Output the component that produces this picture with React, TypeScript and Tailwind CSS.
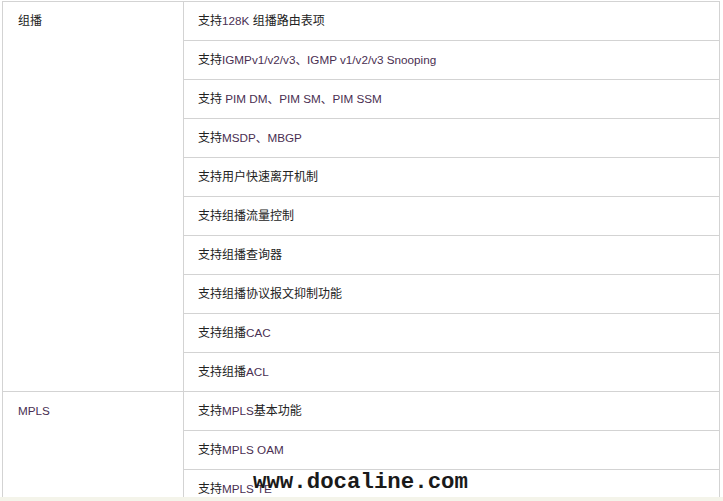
const groups = [
  {
    label: "组播",
    rows: [
      ["支持", "128K", " 组播路由表项"],
      ["支持", "IGMPv1/v2/v3、IGMP v1/v2/v3 Snooping"],
      ["支持", " PIM DM、PIM SM、PIM SSM"],
      ["支持", "MSDP、MBGP"],
      ["支持用户快速离开机制"],
      ["支持组播流量控制"],
      ["支持组播查询器"],
      ["支持组播协议报文抑制功能"],
      ["支持组播", "CAC"],
      ["支持组播", "ACL"],
    ],
  },
  {
    label: "MPLS",
    rows: [
      ["支持", "MPLS", "基本功能"],
      ["支持", "MPLS OAM"],
      ["支持", "MPLS TE"],
    ],
  },
];

// odd-index pieces are Latin text, shown in the purplish tone of the shot
function Cell({ parts }: { parts: string[] }) {
  return (
    <span className="whitespace-pre">
      {parts.map((p, i) =>
        i % 2 === 1 ? (
          <span key={i} className="text-[#4a2f52] text-[11.7px]">
            {p}
          </span>
        ) : (
          <span key={i}>{p}</span>
        )
      )}
    </span>
  );
}

function LabelText({ text }: { text: string }) {
  const latin = /^[A-Za-z]/.test(text);
  return <span className={latin ? "text-[#4a2f52] text-[11.7px]" : ""}>{text}</span>;
}

export default function App() {
  return (
    <div
      className="w-[723px] h-[501px] overflow-hidden bg-white relative text-[12px] text-[#222]"
      style={{ fontFamily: '"Liberation Sans", "Noto Sans CJK SC", sans-serif' }}
    >
      <div className="h-[497px] overflow-hidden pt-px pl-[2px]">
        <div className="w-[718px] border-t border-l border-r border-[#d3d3d3]">
          {groups.map((g) => (
            <div key={g.label} className="flex border-b border-[#d3d3d3]">
              <div className="w-[181px] shrink-0 border-r border-[#d3d3d3]">
                <div className="h-[38px] flex items-center pl-[15px]">
                  <LabelText text={g.label} />
                </div>
              </div>
              <div className="flex-1">
                {g.rows.map((r, i) => (
                  <div
                    key={i}
                    className={
                      i < g.rows.length - 1
                        ? "h-[39px] flex items-center pl-[14px] border-b border-[#d3d3d3]"
                        : "h-[38px] flex items-center pl-[14px]"
                    }
                  >
                    <Cell parts={r} />
                  </div>
                ))}
              </div>
            </div>
          ))}
        </div>
      </div>
      <div className="h-[4px] bg-[#f4f4ea]" />

      {/* watermark */}
      <div
        className="absolute left-[253px] top-[471px] text-[22.4px] leading-none font-bold text-[#1a1a1a]"
        style={{ fontFamily: '"Liberation Mono", monospace' }}
      >
        www.docaline.com
      </div>
    </div>
  );
}
